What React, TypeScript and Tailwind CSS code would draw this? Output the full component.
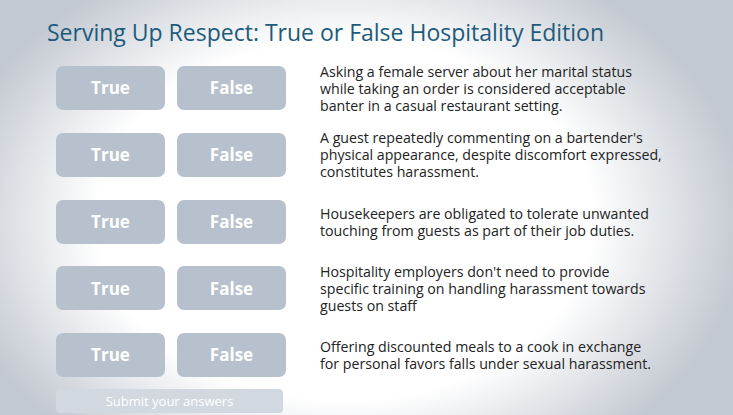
import React from "react";

const questions: string[][] = [
  [
    "Asking a female server about her marital status",
    "while taking an order is considered acceptable",
    "banter in a casual restaurant setting.",
  ],
  [
    "A guest repeatedly commenting on a bartender's",
    "physical appearance, despite discomfort expressed,",
    "constitutes harassment.",
  ],
  [
    "Housekeepers are obligated to tolerate unwanted",
    "touching from guests as part of their job duties.",
  ],
  [
    "Hospitality employers don't need to provide",
    "specific training on handling harassment towards",
    "guests on staff",
  ],
  [
    "Offering discounted meals to a cook in exchange",
    "for personal favors falls under sexual harassment.",
  ],
];

export default function App() {
  return (
    <div
      className="w-[733px] h-[415px] overflow-hidden bg-[radial-gradient(ellipse_400px_290px_at_345px_220px,#ffffff_0%,#ffffff_62%,#c3c9d1_100%)]"
      style={{ fontFamily: '"Open Sans", "Noto Sans", sans-serif' }}
    >
      <h1 className="pl-[47px] pt-[17px] text-[23px] leading-[30px] text-[#1d5b7c]">
        Serving Up Respect: True or False Hospitality Edition
      </h1>
      <div className="pl-[56px] pt-[19px] flex flex-col gap-[22.75px]">
        {questions.map((lines, i) => (
          <div key={i} className="flex items-center h-[44px]">
            <div className="flex gap-[12px] shrink-0">
              <button className="w-[109px] h-[44px] rounded-[7px] bg-[#b7c1cd] text-white font-bold text-[17px]">
                True
              </button>
              <button className="w-[109px] h-[44px] rounded-[7px] bg-[#b7c1cd] text-white font-bold text-[17px]">
                False
              </button>
            </div>
            <p className="ml-[34px] text-[14.2px] leading-[17px] text-[#222222] whitespace-nowrap">
              {lines.map((l, j) => (
                <span key={j} className="block">
                  {l}
                </span>
              ))}
            </p>
          </div>
        ))}
      </div>
      <button className="ml-[56px] mt-[12px] w-[227px] h-[24px] rounded-[4px] bg-[#d1d8e0] text-white text-[13px] leading-[24px]">
        Submit your answers
      </button>
    </div>
  );
}
